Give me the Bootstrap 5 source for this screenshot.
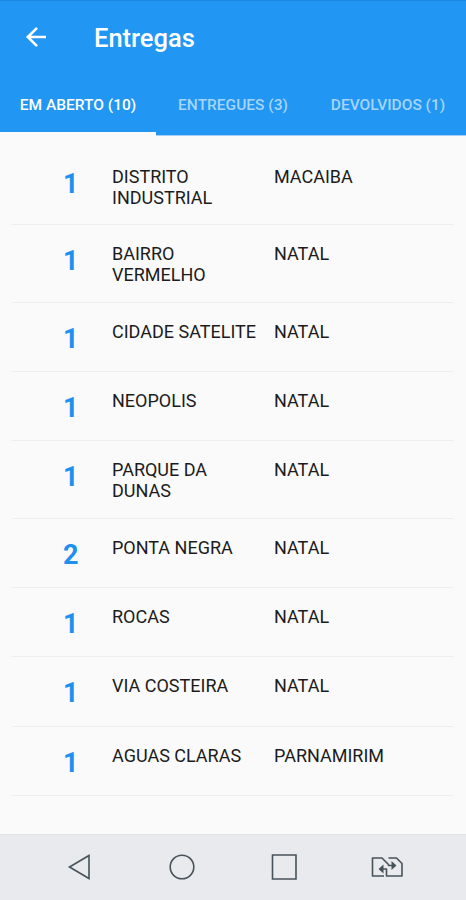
<!DOCTYPE html>
<html lang="pt-BR">
<head>
<meta charset="utf-8">
<meta name="viewport" content="width=device-width, initial-scale=1">
<title>Entregas</title>
<link href="https://cdn.jsdelivr.net/npm/bootstrap@5.3.0/dist/css/bootstrap.min.css" rel="stylesheet">
<style>
body{font-family:Roboto,sans-serif;background:#fafafa;color:#1c1c1c;height:900px;overflow:hidden}
.app-head{background:#2196f3;height:136px;border-top:1px solid #1b87e0;border-bottom:1px solid #a3cff8}
.title-bar{height:74px;padding-left:25px}
.title-bar svg{margin-bottom:3px}
.title-bar h1{font-size:25.5px;font-weight:500;margin-left:47px;line-height:30px}
.tabs-row{height:60px}
.tabs-row .nav-link{font-size:15.500px;font-weight:500;color:#a6d5fa;padding:0;height:60px;line-height:60px;border-radius:0;white-space:nowrap;text-align:center}
.tabs-row .nav-link.active{color:#fff;height:61px;border-bottom:4px solid #fafafa}
.tab-a{width:156px}.tab-b{width:154px}.tab-c{width:156px}
.places{margin:12px 13px 0 12px}
.place{height:69.35px;border-bottom:1px solid #eee;padding-top:18px;font-size:18px;line-height:21px}
.place.tall{height:77.3px}
.qty{width:100px;padding-left:51px;font-size:27px;font-weight:700;color:#2090ee;line-height:32px;padding-top:2px}
.district{width:162px;padding-right:12px}
.sysbar{height:66px;background:#e8eaed;border-top:1px solid #e2e4e7;padding-bottom:2px}
.sysbar svg{display:block;fill:none;stroke:#48525a;stroke-width:1.6}
.sysbar .col{flex:0 0 102.6px}
.sysbar .arrowhead{fill:#48525a;stroke:none}
</style>
</head>
<body class="d-flex flex-column">
<header class="app-head flex-shrink-0">
  <div class="title-bar d-flex align-items-center text-white">
    <svg width="22" height="22" viewBox="0 0 22 22" fill="none" stroke="#fff" stroke-width="2.600"><path d="M21 11H3M12 1.800 2.800 11l9.200 9.200"/></svg>
    <h1 class="mb-0">Entregas</h1>
  </div>
  <nav class="nav tabs-row flex-nowrap">
    <a class="nav-link active tab-a" href="#">EM ABERTO (10)</a>
    <a class="nav-link tab-b" href="#">ENTREGUES (3)</a>
    <a class="nav-link tab-c" href="#">DEVOLVIDOS (1)</a>
  </nav>
</header>
<main class="flex-grow-1">
  <div class="places">
    <div class="place tall d-flex"><div class="qty">1</div><div class="district">DISTRITO INDUSTRIAL</div><div>MACAIBA</div></div>
    <div class="place tall d-flex"><div class="qty">1</div><div class="district">BAIRRO VERMELHO</div><div>NATAL</div></div>
    <div class="place d-flex"><div class="qty">1</div><div class="district">CIDADE SATELITE</div><div>NATAL</div></div>
    <div class="place d-flex"><div class="qty">1</div><div class="district">NEOPOLIS</div><div>NATAL</div></div>
    <div class="place tall d-flex"><div class="qty">1</div><div class="district">PARQUE DA<br>DUNAS</div><div>NATAL</div></div>
    <div class="place d-flex"><div class="qty">2</div><div class="district">PONTA NEGRA</div><div>NATAL</div></div>
    <div class="place d-flex"><div class="qty">1</div><div class="district">ROCAS</div><div>NATAL</div></div>
    <div class="place d-flex"><div class="qty">1</div><div class="district">VIA COSTEIRA</div><div>NATAL</div></div>
    <div class="place d-flex"><div class="qty">1</div><div class="district">AGUAS CLARAS</div><div>PARNAMIRIM</div></div>
  </div>
</main>
<footer class="sysbar flex-shrink-0 d-flex justify-content-center align-items-center">
  <div class="col d-flex justify-content-center"><svg width="28" height="28" viewBox="0 0 28 28"><path d="M24 2.500V25.500L4.500 14Z"/></svg></div>
  <div class="col d-flex justify-content-center"><svg width="28" height="28" viewBox="0 0 28 28"><circle cx="14" cy="14" r="11.800"/></svg></div>
  <div class="col d-flex justify-content-center"><svg width="28" height="28" viewBox="0 0 28 28"><path d="M2.500 2H26V26H2.500Z"/></svg></div>
  <div class="col d-flex justify-content-center"><svg width="34" height="22" viewBox="0 0 34 22" stroke-width="2" stroke-linejoin="round"><path d="M14 20H2.500V2H12L18.500 8.500V9.500H22M18.500 2H26.500L32 7.500V20H16.500V13H13"/><path class="arrowhead" d="M21.500 5 26.500 9.500 21.500 14ZM13.500 8.500 8.500 13 13.500 17.500Z"/></svg></div>
</footer>
<script src="https://cdn.jsdelivr.net/npm/bootstrap@5.3.0/dist/js/bootstrap.bundle.min.js"></script>
</body>
</html>
